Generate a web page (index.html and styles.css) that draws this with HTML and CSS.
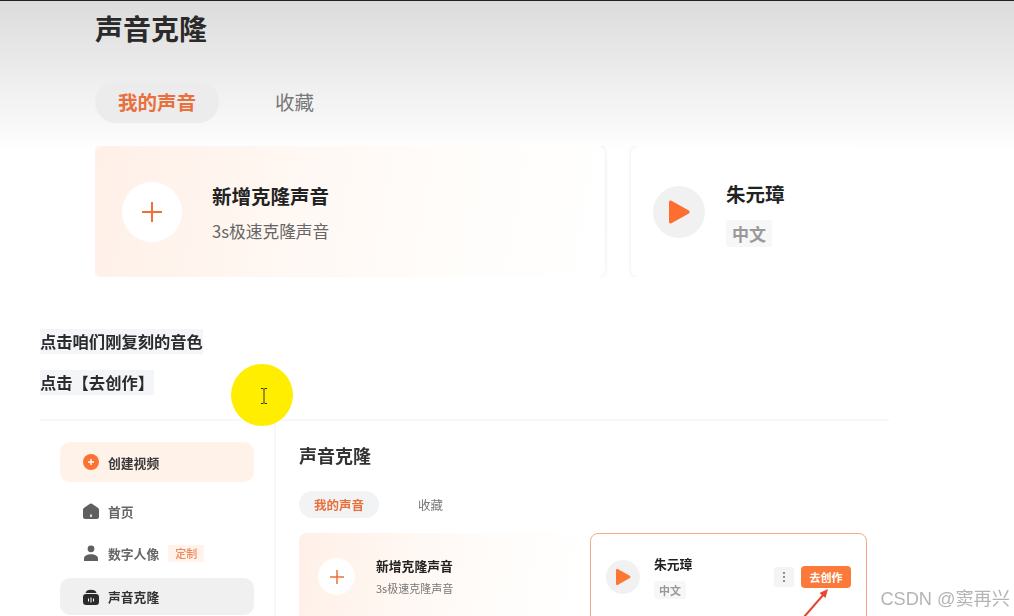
FILE: index.html
```html
<!DOCTYPE html>
<html lang="zh-CN">
<head>
    <meta charset="UTF-8">
    <meta name="viewport" content="width=device-width, initial-scale=1.0">
    <title>声音克隆</title>
    <link rel="stylesheet" href="styles.css">
</head>
<body>
<div class="page">

    <section class="top">
        <h1>声音克隆</h1>
        <div class="tabs">
            <span class="tab active">我的声音</span>
            <span class="tab">收藏</span>
        </div>
        <div class="cards">
            <div class="card add">
                <div class="plus">
                    <svg width="22" height="22" viewBox="0 0 22 22"><path d="M11 1v20M1 11h20" stroke="#ee7038" stroke-width="2" fill="none"/></svg>
                </div>
                <div class="text">
                    <div class="card-title">新增克隆声音</div>
                    <div class="card-sub">3s极速克隆声音</div>
                </div>
            </div>
            <div class="card voice">
                <div class="play">
                    <svg width="24" height="26" viewBox="0 0 24 26"><path d="M2 3.200c0-1.300 1.300-2 2.400-1.400l17.400 9.800c1.100.6 1.100 2.200 0 2.800L4.400 24.200C3.300 24.800 2 24.100 2 22.800z" fill="#fd6e30"/></svg>
                </div>
                <div class="text">
                    <div class="card-title">朱元璋</div>
                    <span class="lang">中文</span>
                </div>
            </div>
        </div>
    </section>

    <section class="notes">
        <p><span>点击咱们刚复刻的音色</span></p>
        <p><span>点击【去创作】</span></p>
    </section>

    <section class="app">
        <aside class="side">
            <div class="create">
                <svg width="16" height="16" viewBox="0 0 16 16"><circle cx="8" cy="8" r="8" fill="#fb7233"/><path d="M8 5v6M5 8h6" stroke="#fff" stroke-width="1.400"/></svg>
                创建视频
            </div>
            <div class="menu first">
                <svg width="16" height="16" viewBox="0 0 16 16"><path d="M7 .8a1.800 1.800 0 0 1 2 0l5.800 4A2.500 2.500 0 0 1 16 7v6.500a2.500 2.500 0 0 1-2.500 2.500h-11A2.500 2.500 0 0 1 0 13.500V7a2.500 2.500 0 0 1 1.200-2.200z" fill="#5f5f5f"/><rect x="7.200" y="11.500" width="1.600" height="2.500" fill="#fff"/></svg>
                首页
            </div>
            <div class="menu second">
                <svg width="16" height="16" viewBox="0 0 16 16"><circle cx="8" cy="3.800" r="3.400" fill="#5f5f5f"/><path d="M1 16v-2.500C1 10.800 4 9.200 8 9.200s7 1.600 7 4.300V16z" fill="#5f5f5f"/></svg>
                数字人像
                <span class="badge">定制</span>
            </div>
            <div class="menu current">
                <svg width="16" height="16" viewBox="0 0 16 16"><path d="M2.500 4C3 1.800 5 .8 8 .8s5 1 5.500 3.200z" fill="#2b2b2b"/><rect x="0" y="5" width="16" height="11" rx="3" fill="#2b2b2b"/><path d="M5.500 9.500v3M8 8.500v5M10.500 9.500v3" stroke="#fff" stroke-width="1"/></svg>
                声音克隆
            </div>
        </aside>
        <main class="main">
            <h2>声音克隆</h2>
            <div class="tabs small">
                <span class="tab active">我的声音</span>
                <span class="tab">收藏</span>
            </div>
            <div class="cards small">
                <div class="card add">
                    <div class="plus">
                        <svg width="14" height="14" viewBox="0 0 14 14"><path d="M7 0v14M0 7h14" stroke="#ee7038" stroke-width="1.500" fill="none"/></svg>
                    </div>
                    <div class="text">
                        <div class="card-title">新增克隆声音</div>
                        <div class="card-sub">3s极速克隆声音</div>
                    </div>
                </div>
                <div class="card voice picked">
                    <div class="play">
                        <svg width="16" height="18" viewBox="0 0 16 18"><path d="M1 2.200C1 1.200 2 .7 2.800 1.100l12 6.700c.8.500.8 1.800 0 2.300l-12 6.800C2 17.300 1 16.800 1 15.800z" fill="#fd7632"/></svg>
                    </div>
                    <div class="text">
                        <div class="card-title">朱元璋</div>
                        <span class="lang">中文</span>
                    </div>
                    <div class="actions">
                        <span class="more">
                            <svg width="4" height="12" viewBox="0 0 4 12"><circle cx="2" cy="2" r="1.100" fill="#777"/><circle cx="2" cy="6" r="1.100" fill="#777"/><circle cx="2" cy="10" r="1.100" fill="#777"/></svg>
                        </span>
                        <span class="go">去创作</span>
                    </div>
                    <svg class="arrow" width="28" height="30" viewBox="0 0 28 30"><path d="M2 29 22 6" stroke="#e5482d" stroke-width="2" fill="none"/><path d="M26 1 23.500 10 17.500 5z" fill="#e5482d"/></svg>
                </div>
            </div>
        </main>
    </section>

    <div class="pointer">
        <svg width="10" height="18" viewBox="0 0 10 18"><path d="M2 1.500h2.200L5 2.500l.8-1H8M5 2.500v13M2 16.500h2.200l.8-1 .8 1H8" stroke="#333" stroke-width="1" fill="none"/></svg>
    </div>
    <div class="watermark">CSDN @窦再兴</div>
</div>
</body>
</html>
```

FILE: styles.css
```css
* {
    box-sizing: border-box;
}

html, body {
    margin: 0;
    padding: 0;
    background-color: #fff;
}

body {
    font-family: "Noto Sans CJK SC", "Noto Sans", sans-serif;
    color: #222;
}

.page {
    position: relative;
    width: 1014px;
    height: 616px;
    overflow: hidden;
    filter: blur(0.5px);
}

/* big capture at the top */
.top {
    height: 329px;
    padding: 10px 0 0 95px;
    border-top: 1px solid #222;
    background: linear-gradient(#dcdcdc 0, #e6e6e6 45px, #f4f4f4 105px, #fff 150px);
}

h1 {
    margin: 0;
    font-size: 28px;
    line-height: 34px;
    font-weight: 700;
    letter-spacing: 0;
    color: #2a2a2a;
}

.tabs {
    display: flex;
    align-items: center;
    gap: 37px;
    margin-top: 36px;
}

.tab {
    padding: 0 19px;
    height: 42px;
    line-height: 42px;
    border-radius: 21px;
    font-size: 19.500px;
    color: #777;
}

.tab.active {
    padding: 0 23px;
    background-color: #ececec;
    color: #e96f3c;
    font-weight: 700;
}

.cards {
    display: flex;
    gap: 26px;
    width: 765px;
    height: 131px;
    margin-top: 23px;
    overflow: hidden;
}

.card {
    display: flex;
    align-items: center;
    flex: none;
    height: 131px;
    border-radius: 8px;
    box-shadow: 0 0 4px rgba(0, 0, 0, 0.1);
    background-color: #fff;
}

.card.add {
    width: 510px;
    padding-left: 27px;
    gap: 30px;
    background: linear-gradient(100deg, #fff0e7 0, #fff9f5 45%, #fffdfb 75%, #fff 100%);
}

.card.voice {
    width: 300px;
    padding-left: 22px;
    gap: 21px;
}

.card.add .text {
    padding-top: 2px;
}

.card.voice .text {
    padding-top: 3px;
}

.plus {
    display: flex;
    align-items: center;
    justify-content: center;
    width: 60px;
    height: 60px;
    border-radius: 50%;
    background-color: #fff;
}

.play {
    display: flex;
    align-items: center;
    justify-content: center;
    width: 52px;
    height: 52px;
    border-radius: 50%;
    background-color: #f1f1f1;
}

.card-title {
    font-size: 19.500px;
    line-height: 28px;
    font-weight: 700;
    color: #222;
}

.card-sub {
    margin-top: 9px;
    font-size: 16.700px;
    line-height: 24px;
    color: #666;
}

.lang {
    display: inline-block;
    margin-top: 12px;
    padding: 0 6px;
    height: 27px;
    line-height: 27px;
    border-radius: 3px;
    background-color: #f7f7f7;
    font-size: 17px;
    font-weight: 700;
    color: #999;
}

/* notes between the captures */
.notes {
    padding-bottom: 8px;
}

.notes p {
    margin: 0 0 16px 40px;
    height: 25px;
    line-height: 25px;
    font-size: 16.300px;
    font-weight: 700;
    color: #2b2b2b;
}

.notes span {
    display: inline-block;
    background-color: #f3f5f8;
}

/* small capture at the bottom */
.app {
    display: flex;
    height: 200px;
    margin: 0 125px 0 40px;
    border-top: 2px solid #f8f8f8;
}

.side {
    flex: none;
    width: 236px;
    padding: 21px 20px 0 20px;
    border-right: 2px solid #f8f8f8;
}

.create, .menu {
    display: flex;
    align-items: center;
    gap: 9px;
    height: 40px;
    padding-left: 23px;
    border-radius: 10px;
    font-size: 12.800px;
    font-weight: 700;
    color: #666;
}

.create {
    background-color: #fff2e9;
    color: #3a3a3a;
}

.menu.first {
    margin-top: 9px;
}

.menu.second {
    margin-top: 2px;
}

.menu.current {
    margin-top: 5px;
    height: 37px;
    background-color: #f0f0f0;
    color: #333;
}

.badge {
    margin-left: 0;
    padding: 0 7px;
    height: 17px;
    line-height: 17px;
    background-color: #fff3ec;
    font-size: 11px;
    font-weight: 500;
    color: #f08a5a;
}

.main {
    padding: 21px 0 0 23px;
    flex: 1;
}

h2 {
    margin: 0;
    font-size: 18px;
    line-height: 26px;
    font-weight: 700;
    color: #333;
}

.tabs.small {
    gap: 26px;
    margin-top: 23px;
}

.tabs.small .tab {
    height: 27px;
    line-height: 27px;
    padding: 0 13px;
    font-size: 12.500px;
    border-radius: 14px;
}

.tabs.small .tab.active {
    padding: 0 15px;
    background-color: #f2f3f4;
}

.cards.small {
    width: 568px;
    height: 100px;
    gap: 15px;
    margin-top: 15px;
    overflow: visible;
}

.cards.small .card {
    align-self: flex-start;
    height: 116px;
    box-shadow: none;
}

.cards.small .card.add {
    width: 276px;
    padding: 0 0 29px 19px;
    gap: 21px;
}

.cards.small .card.voice {
    position: relative;
    width: 277px;
    padding: 0 0 27px 15px;
    gap: 14px;
}

.cards.small .card.picked {
    border: 1.500px solid #f5a98c;
}

.cards.small .text {
    padding-top: 0;
}

.cards.small .plus {
    width: 37px;
    height: 37px;
}

.cards.small .play {
    width: 34px;
    height: 34px;
    margin-bottom: 2px;
}

.cards.small .card-title {
    font-size: 12.800px;
    line-height: 18px;
}

.cards.small .card-sub {
    margin-top: 5px;
    font-size: 11px;
    line-height: 16px;
    color: #777;
}

.cards.small .lang {
    margin-top: 8px;
    height: 18px;
    line-height: 18px;
    padding: 0 5px;
    font-size: 11px;
}

.actions {
    display: flex;
    align-items: center;
    gap: 7px;
    margin: 0 15px 2px auto;
}

.more {
    display: flex;
    align-items: center;
    justify-content: center;
    width: 20px;
    height: 20px;
    border-radius: 3px;
    background-color: #f4f4f4;
}

.go {
    width: 50px;
    height: 22px;
    line-height: 22px;
    border-radius: 4px;
    background-color: #fb7a3b;
    text-align: center;
    font-size: 11px;
    font-weight: 700;
    color: #fff;
}

.arrow {
    position: absolute;
    left: 211px;
    top: 54px;
}

/* recorded mouse pointer */
.pointer {
    position: absolute;
    left: 231px;
    top: 364px;
    display: flex;
    align-items: center;
    justify-content: center;
    width: 62px;
    height: 62px;
    padding: 2px 0 0 3px;
    border-radius: 50%;
    background-color: #ffee00;
}

.watermark {
    position: absolute;
    right: 4px;
    bottom: 5px;
    font-family: "Liberation Sans", "Noto Sans CJK SC", sans-serif;
    font-size: 18.200px;
    line-height: 24px;
    color: #b4b4b4;
}
```
